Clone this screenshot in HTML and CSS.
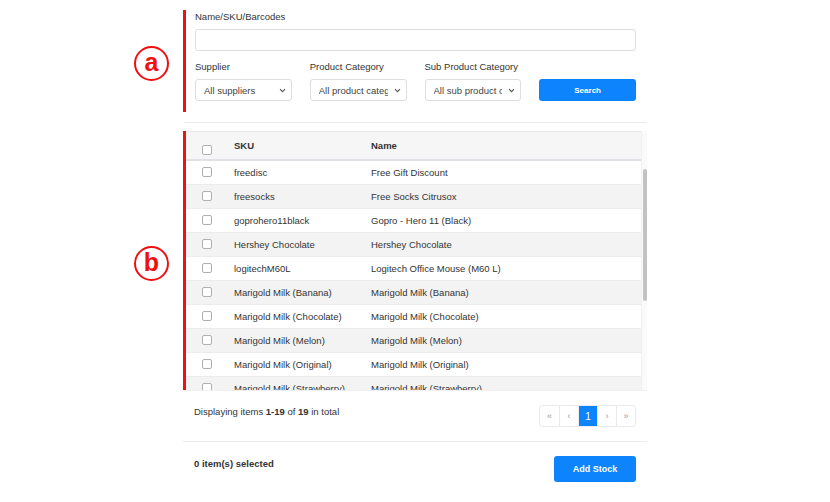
FILE: index.html
```html
<!DOCTYPE html>
<html lang="en">
<head>
    <meta charset="UTF-8">
    <meta name="viewport" content="width=device-width, initial-scale=1.0">
    <title>Add Stock - Select Products</title>
    <link rel="stylesheet" href="styles.css">
</head>
<body>
    <div class="page">
        <div class="filters">
            <span class="marker marker-a">a</span>
            <label class="field-label" for="keyword">Name/SKU/Barcodes</label>
            <input type="text" id="keyword" class="text-input">

            <div class="filter-row">
                <div class="filter">
                    <label class="field-label">Supplier</label>
                    <div class="select-wrap">
                        <select class="select"><option>All suppliers</option></select>
                        <svg class="caret" width="7" height="5" viewBox="0 0 7 5"><path d="M1 1.2 3.5 3.7 6 1.2" fill="none" stroke="#555" stroke-width="1.1"/></svg>
                    </div>
                </div>
                <div class="filter">
                    <label class="field-label">Product Category</label>
                    <div class="select-wrap">
                        <select class="select"><option>All product categories</option></select>
                        <svg class="caret" width="7" height="5" viewBox="0 0 7 5"><path d="M1 1.2 3.5 3.7 6 1.2" fill="none" stroke="#555" stroke-width="1.1"/></svg>
                    </div>
                </div>
                <div class="filter">
                    <label class="field-label">Sub Product Category</label>
                    <div class="select-wrap">
                        <select class="select"><option>All sub product categories</option></select>
                        <svg class="caret" width="7" height="5" viewBox="0 0 7 5"><path d="M1 1.2 3.5 3.7 6 1.2" fill="none" stroke="#555" stroke-width="1.1"/></svg>
                    </div>
                </div>
                <div class="filter filter-btn">
                    <button class="btn btn-search">Search</button>
                </div>
            </div>
        </div>

        <div class="divider"></div>

        <div class="list">
            <span class="marker marker-b">b</span>
            <div class="table-wrap">
                <table class="products">
                    <thead>
                        <tr>
                            <th class="col-check"><input type="checkbox" class="check"></th>
                            <th class="col-sku">SKU</th>
                            <th>Name</th>
                        </tr>
                    </thead>
                    <tbody>
                        <tr><td class="col-check"><input type="checkbox" class="check"></td><td>freedisc</td><td>Free Gift Discount</td></tr>
                        <tr><td class="col-check"><input type="checkbox" class="check"></td><td>freesocks</td><td>Free Socks Citrusox</td></tr>
                        <tr><td class="col-check"><input type="checkbox" class="check"></td><td>goprohero11black</td><td>Gopro - Hero 11 (Black)</td></tr>
                        <tr><td class="col-check"><input type="checkbox" class="check"></td><td>Hershey Chocolate</td><td>Hershey Chocolate</td></tr>
                        <tr><td class="col-check"><input type="checkbox" class="check"></td><td>logitechM60L</td><td>Logitech Office Mouse (M60 L)</td></tr>
                        <tr><td class="col-check"><input type="checkbox" class="check"></td><td>Marigold Milk (Banana)</td><td>Marigold Milk (Banana)</td></tr>
                        <tr><td class="col-check"><input type="checkbox" class="check"></td><td>Marigold Milk (Chocolate)</td><td>Marigold Milk (Chocolate)</td></tr>
                        <tr><td class="col-check"><input type="checkbox" class="check"></td><td>Marigold Milk (Melon)</td><td>Marigold Milk (Melon)</td></tr>
                        <tr><td class="col-check"><input type="checkbox" class="check"></td><td>Marigold Milk (Original)</td><td>Marigold Milk (Original)</td></tr>
                        <tr><td class="col-check"><input type="checkbox" class="check"></td><td>Marigold Milk (Strawberry)</td><td>Marigold Milk (Strawberry)</td></tr>
                        <tr><td class="col-check"><input type="checkbox" class="check"></td><td>Milo 3in1</td><td>Milo 3in1</td></tr>
                        <tr><td class="col-check"><input type="checkbox" class="check"></td><td>Nescafe Original</td><td>Nescafe Original</td></tr>
                        <tr><td class="col-check"><input type="checkbox" class="check"></td><td>Oreo Vanilla</td><td>Oreo Vanilla</td></tr>
                    </tbody>
                </table>
            </div>
            <div class="scrollbar"><div class="scroll-thumb"></div></div>
        </div>

        <div class="pager-row">
            <p class="summary">Displaying items <b>1-19</b> of <b>19</b> in total</p>
            <div class="pagination">
                <span class="page-item">&laquo;</span>
                <span class="page-item">&lsaquo;</span>
                <span class="page-item active">1</span>
                <span class="page-item">&rsaquo;</span>
                <span class="page-item">&raquo;</span>
            </div>
        </div>

        <div class="actions">
            <p class="selected-count">0 item(s) selected</p>
            <button class="btn btn-add">Add Stock</button>
        </div>
    </div>
</body>
</html>
```

FILE: styles.css
```css
* {
    box-sizing: border-box;
}

body {
    margin: 0;
    background-color: #ffffff;
    font-family: "Liberation Sans", Arial, sans-serif;
    font-size: 9.5px;
    color: #333333;
}

.page {
    width: 464px;
    margin: 0 auto;
    padding-top: 10px;
}

.marker {
    position: absolute;
    left: -52px;
    width: 35px;
    height: 35px;
    border: 2.5px solid #f01010;
    border-radius: 50%;
    color: #f01010;
    font-size: 25px;
    font-weight: bold;
    line-height: 28px;
    text-align: center;
}

.marker-a {
    top: 36px;
}

.marker-b {
    top: 115px;
}

.filters {
    position: relative;
    border-left: 3px solid #f01010;
    padding: 1px 11px 11px 9px;
}

.field-label {
    display: block;
    line-height: 12px;
    color: #333333;
    white-space: nowrap;
}

.text-input {
    display: block;
    width: 100%;
    height: 22px;
    margin-top: 6px;
    border: 1px solid #dedede;
    border-radius: 3px;
}

.filter-row {
    display: grid;
    grid-template-columns: repeat(4, 1fr);
    column-gap: 18px;
    margin-top: 10px;
}

.filter-btn {
    display: flex;
    align-items: flex-end;
}

.select-wrap {
    position: relative;
    margin-top: 6px;
}

.select {
    appearance: none;
    -webkit-appearance: none;
    display: block;
    width: 100%;
    height: 22px;
    padding: 0 18px 0 8px;
    border: 1px solid #dedede;
    border-radius: 3px;
    background-color: #ffffff;
    font-family: inherit;
    font-size: 9.5px;
    color: #444444;
}

.caret {
    position: absolute;
    right: 6px;
    top: 9px;
    pointer-events: none;
}

.btn {
    border: none;
    border-radius: 3px;
    background-color: #0d84fb;
    color: #ffffff;
    font-family: inherit;
    font-weight: bold;
    cursor: pointer;
}

.btn-search {
    width: 100%;
    height: 22px;
    font-size: 8px;
}

.divider {
    height: 1px;
    margin: 10px 0 8px 1px;
    background-color: #eaeaea;
}

.list {
    position: relative;
    display: flex;
    border-left: 3px solid #f01010;
}

.table-wrap {
    flex: 1;
    height: 259px;
    overflow: hidden;
    border-top: 1px solid #e8e8e8;
}

.scrollbar {
    width: 6px;
    padding-top: 38px;
    background-color: #fafafa;
    border-left: 1px solid #f0f0f0;
}

.scroll-thumb {
    width: 4px;
    height: 132px;
    margin-left: 1px;
    border-radius: 2px;
    background-color: #c2c2c2;
}

.products {
    width: 100%;
    border-collapse: collapse;
}

.products th {
    height: 28px;
    padding: 0 8px;
    background-color: #f6f6f6;
    border-bottom: 2px solid #dfe3e7;
    text-align: left;
    font-weight: bold;
    color: #333333;
}

.products td {
    height: 24px;
    padding: 0 8px;
    border-bottom: 1px solid #ececec;
    color: #333333;
    white-space: nowrap;
}

.products tbody tr:nth-child(even) td {
    background-color: #f3f3f3;
}

.products .col-check {
    width: 40px;
    padding-left: 16px;
}

.products th.col-check {
    vertical-align: bottom;
    padding-bottom: 4px;
}

.products .col-sku {
    width: 137px;
}

.check {
    appearance: none;
    -webkit-appearance: none;
    display: block;
    width: 10px;
    height: 10px;
    margin: 0;
    border: 1px solid #b0b0b0;
    border-radius: 2px;
    background-color: #ffffff;
}

.pager-row {
    display: flex;
    justify-content: space-between;
    align-items: flex-start;
    padding: 14px 11px 14px 11px;
    border-bottom: 1px solid #eaeaea;
    border-top: 1px solid #f0f0f0;
}

.summary {
    margin: 0;
    padding-top: 1px;
    line-height: 12px;
}

.pagination {
    display: flex;
    border: 1px solid #ebebeb;
    border-radius: 3px;
}

.page-item {
    display: flex;
    align-items: center;
    justify-content: center;
    width: 19px;
    height: 20px;
    border-left: 1px solid #ebebeb;
    color: #999999;
    font-size: 9px;
}

.page-item:first-child {
    border-left: none;
}

.page-item.active {
    background-color: #0d84fb;
    color: #ffffff;
    font-size: 10px;
}

.actions {
    display: flex;
    justify-content: space-between;
    align-items: flex-start;
    padding: 14px 11px 0 11px;
}

.selected-count {
    margin: 0;
    padding-top: 2px;
    line-height: 12px;
    font-weight: bold;
}

.btn-add {
    width: 82px;
    height: 26px;
    font-size: 9px;
}
```
